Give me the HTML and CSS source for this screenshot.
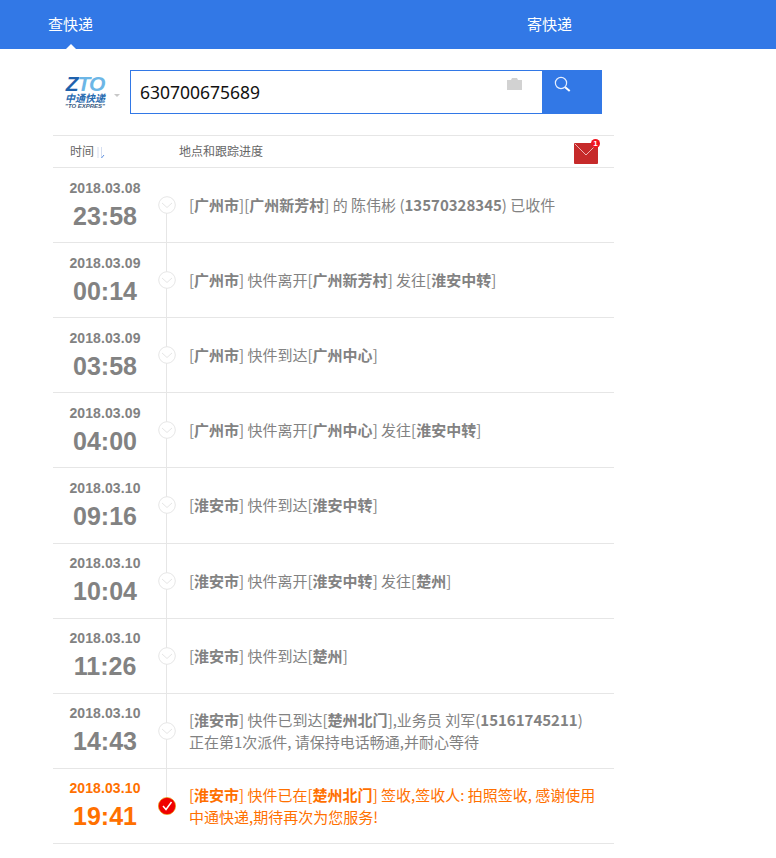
FILE: index.html
```html
<!DOCTYPE html>
<html lang="zh">
<head>
<meta charset="utf-8">
<title>查快递</title>
<link rel="stylesheet" href="styles.css">
</head>
<body>
<nav class="nav">
  <a class="tab tab-active">查快递</a>
  <a class="tab">寄快递</a>
</nav>
<main class="page">
  <div class="search">
    <div class="logo">
      <div class="logo-mark"><span class="logo-z">Z</span>TO</div>
      <div class="logo-cn">中通快递</div>
      <div class="logo-en">"TO EXPRES"</div>
    </div>
    <span class="logo-caret"></span>
    <div class="input">
      <span class="input-value">630700675689</span>
      <svg class="camera" width="15" height="12" viewBox="0 0 15 12"><path fill="#d2d2d2" d="M0 2h4l1-2h5l1 2h4v10H0z"/></svg>
    </div>
    <button class="go" type="button" aria-label="查询">
      <svg width="18" height="18" viewBox="0 0 18 18"><circle cx="7" cy="7" r="5.600" fill="none" stroke="#e6efff" stroke-width="1.200"/><path d="M11.200 11.200l4.500 3.800" stroke="#fff" stroke-width="2"/></svg>
    </button>
  </div>

  <div class="head">
    <div class="head-time">时间<svg class="sort" width="10" height="13" viewBox="0 0 10 13"><path d="M3 1v11" stroke="#d5def0"/><path d="M6.500 1v11" stroke="#d5def0"/><path d="M6.500 12l2.500-3" stroke="#5b8fe0"/></svg></div>
    <div class="head-text">地点和跟踪进度</div>
    <div class="mail">
      <svg width="24" height="21" viewBox="0 0 24 21"><rect width="24" height="21" rx="1" fill="#c62a2a"/><path d="M1 1l11 11L23 1" fill="none" stroke="#eeb4b4" stroke-width="1"/></svg>
      <span class="mail-badge">1</span>
    </div>
  </div>

  <ul class="list">
    <li class="row first">
      <div class="when"><div class="date">2018.03.08</div><div class="time">23:58</div></div>
      <div class="node"><svg class="dot" width="18" height="18" viewBox="0 0 18 18"><circle cx="9" cy="9" r="8.300" fill="#fff" stroke="#e6e6e6"/><path d="M4 7l5 4.500L14 7" fill="none" stroke="#e6e6e6"/></svg></div>
      <div class="text">[<b>广州市</b>][<b>广州新芳村</b>] 的 陈伟彬 (<b>13570328345</b>) 已收件</div>
    </li>
    <li class="row">
      <div class="when"><div class="date">2018.03.09</div><div class="time">00:14</div></div>
      <div class="node"><svg class="dot" width="18" height="18" viewBox="0 0 18 18"><circle cx="9" cy="9" r="8.300" fill="#fff" stroke="#e6e6e6"/><path d="M4 7l5 4.500L14 7" fill="none" stroke="#e6e6e6"/></svg></div>
      <div class="text">[<b>广州市</b>] 快件离开[<b>广州新芳村</b>] 发往[<b>淮安中转</b>]</div>
    </li>
    <li class="row">
      <div class="when"><div class="date">2018.03.09</div><div class="time">03:58</div></div>
      <div class="node"><svg class="dot" width="18" height="18" viewBox="0 0 18 18"><circle cx="9" cy="9" r="8.300" fill="#fff" stroke="#e6e6e6"/><path d="M4 7l5 4.500L14 7" fill="none" stroke="#e6e6e6"/></svg></div>
      <div class="text">[<b>广州市</b>] 快件到达[<b>广州中心</b>]</div>
    </li>
    <li class="row">
      <div class="when"><div class="date">2018.03.09</div><div class="time">04:00</div></div>
      <div class="node"><svg class="dot" width="18" height="18" viewBox="0 0 18 18"><circle cx="9" cy="9" r="8.300" fill="#fff" stroke="#e6e6e6"/><path d="M4 7l5 4.500L14 7" fill="none" stroke="#e6e6e6"/></svg></div>
      <div class="text">[<b>广州市</b>] 快件离开[<b>广州中心</b>] 发往[<b>淮安中转</b>]</div>
    </li>
    <li class="row">
      <div class="when"><div class="date">2018.03.10</div><div class="time">09:16</div></div>
      <div class="node"><svg class="dot" width="18" height="18" viewBox="0 0 18 18"><circle cx="9" cy="9" r="8.300" fill="#fff" stroke="#e6e6e6"/><path d="M4 7l5 4.500L14 7" fill="none" stroke="#e6e6e6"/></svg></div>
      <div class="text">[<b>淮安市</b>] 快件到达[<b>淮安中转</b>]</div>
    </li>
    <li class="row">
      <div class="when"><div class="date">2018.03.10</div><div class="time">10:04</div></div>
      <div class="node"><svg class="dot" width="18" height="18" viewBox="0 0 18 18"><circle cx="9" cy="9" r="8.300" fill="#fff" stroke="#e6e6e6"/><path d="M4 7l5 4.500L14 7" fill="none" stroke="#e6e6e6"/></svg></div>
      <div class="text">[<b>淮安市</b>] 快件离开[<b>淮安中转</b>] 发往[<b>楚州</b>]</div>
    </li>
    <li class="row">
      <div class="when"><div class="date">2018.03.10</div><div class="time">11:26</div></div>
      <div class="node"><svg class="dot" width="18" height="18" viewBox="0 0 18 18"><circle cx="9" cy="9" r="8.300" fill="#fff" stroke="#e6e6e6"/><path d="M4 7l5 4.500L14 7" fill="none" stroke="#e6e6e6"/></svg></div>
      <div class="text">[<b>淮安市</b>] 快件到达[<b>楚州</b>]</div>
    </li>
    <li class="row">
      <div class="when"><div class="date">2018.03.10</div><div class="time">14:43</div></div>
      <div class="node"><svg class="dot" width="18" height="18" viewBox="0 0 18 18"><circle cx="9" cy="9" r="8.300" fill="#fff" stroke="#e6e6e6"/><path d="M4 7l5 4.500L14 7" fill="none" stroke="#e6e6e6"/></svg></div>
      <div class="text">[<b>淮安市</b>] 快件已到达[<b>楚州北门</b>],业务员 刘军(<b>15161745211</b>) 正在第1次派件, 请保持电话畅通,并耐心等待</div>
    </li>
    <li class="row last">
      <div class="when"><div class="date">2018.03.10</div><div class="time">19:41</div></div>
      <div class="node"><svg class="dot" width="18" height="18" viewBox="0 0 18 18"><circle cx="9" cy="9" r="8.600" fill="#f00000" stroke="#e8a000" stroke-width="0.600"/><path d="M5 9l3 3.500L13.500 5" fill="none" stroke="#fff" stroke-width="1.500"/></svg></div>
      <div class="text">[<b>淮安市</b>] 快件已在[<b>楚州北门</b>] 签收,签收人: 拍照签收, 感谢使用中通快递,期待再次为您服务!</div>
    </li>
  </ul>
</main>
</body>
</html>
```
FILE: styles.css
```css
* { box-sizing: border-box; }
html, body { margin: 0; padding: 0; }
body {
  background: #fff;
  font-family: "Noto Sans CJK SC", "Noto Sans", sans-serif;
  color: #828282;
}
ul { list-style: none; margin: 0; padding: 0; }

.nav {
  height: 49px;
  background: #3278e6;
  display: flex;
  justify-content: space-between;
  padding: 0 204px 0 48px;
}
.tab {
  position: relative;
  color: #fff;
  font-size: 15px;
  line-height: 47px;
}
.tab-active::after {
  content: "";
  position: absolute;
  left: 18px;
  bottom: 0;
  border: 5px solid transparent;
  border-top: 0;
  border-bottom-color: #fff;
}

.page { width: 561px; margin-left: 53px; }

.search {
  display: flex;
  align-items: center;
  height: 44px;
  margin-top: 21px;
  width: 549px;
}
.logo {
  flex: none;
  width: 40px;
  margin-left: 12px;
  padding-top: 2px;
  display: flex;
  flex-direction: column;
  align-items: center;
}
.logo-mark {
  font: italic bold 21px/16px "Liberation Sans", sans-serif;
  color: #6cb6e6;
  letter-spacing: -1px;
}
.logo-z { color: #1f62ad; }
.logo-cn {
  font-size: 10px;
  line-height: 11px;
  font-weight: 700;
  font-style: italic;
  color: #2a6cb0;
  white-space: nowrap;
}
.logo-en {
  font: italic bold 6px/7px "Liberation Sans", sans-serif;
  color: #3a5a80;
  white-space: nowrap;
}
.logo-caret {
  flex: none;
  width: 0;
  height: 0;
  margin: 6px 0 0 9px;
  border: 3px solid transparent;
  border-top: 3px solid #c8c8c8;
  border-bottom: 0;
}
.input {
  flex: 1;
  display: flex;
  align-items: center;
  justify-content: space-between;
  height: 44px;
  margin-left: 10px;
  padding: 0 20px 0 9px;
  border: 1px solid #3278e6;
  border-right: 0;
}
.input-value {
  font: 17.500px/24px "Noto Sans", sans-serif;
  color: #111;
}
.camera { margin-top: -16px; }
.go {
  flex: none;
  width: 60px;
  height: 44px;
  padding: 6px 0 0 12px;
  border: 0;
  background: #3278e6;
  display: flex;
  align-items: flex-start;
}

.head {
  display: flex;
  align-items: center;
  height: 33px;
  margin-top: 21px;
  border-top: 1px solid #e6e6e6;
  border-bottom: 1px solid #e6e6e6;
  font-size: 12px;
  color: #666;
}
.head-time { width: 126px; padding-left: 17px; display: flex; align-items: center; margin-top: -2px; }
.sort { margin: 4px 0 0 1px; }
.head-text { flex: 1; margin-top: -2px; }
.mail { position: relative; width: 24px; height: 21px; margin-right: 16px; margin-top: 3px; }
.mail svg { display: block; }
.mail-badge {
  position: absolute;
  right: -2px;
  top: -4px;
  width: 9px;
  height: 9px;
  border-radius: 50%;
  background: #f0141e;
  color: #fff;
  font: bold 8px/9px "Liberation Sans", sans-serif;
  text-align: center;
}

.row {
  display: grid;
  grid-template-columns: 104px 19px 1fr;
  align-items: center;
  height: 75.120px;
  border-bottom: 1px solid #e6e6e6;
}
.when { text-align: center; font-family: "Liberation Sans", Arial, sans-serif; font-weight: 700; padding-top: 1px; }
.date { font-size: 14px; line-height: 18px; margin-top: -2px; letter-spacing: 0.100px; }
.time { font-size: 25px; line-height: 30px; margin-top: 4px; }
.node {
  position: relative;
  height: 100%;
  display: flex;
  align-items: center;
  justify-content: center;
}
.node::before {
  content: "";
  position: absolute;
  top: 0;
  bottom: -1px;
  left: 9px;
  width: 1px;
  background: #e6e6e6;
}
.first .node::before { top: 50%; }
.last .node::before { bottom: 50%; }
.dot { position: relative; }
.text {
  padding: 0 14px 0 13px;
  font-size: 15px;
  line-height: 22px;
}
.text b { font-weight: 700; }
.last .date, .last .time, .last .text { color: #ff7000; }
```
